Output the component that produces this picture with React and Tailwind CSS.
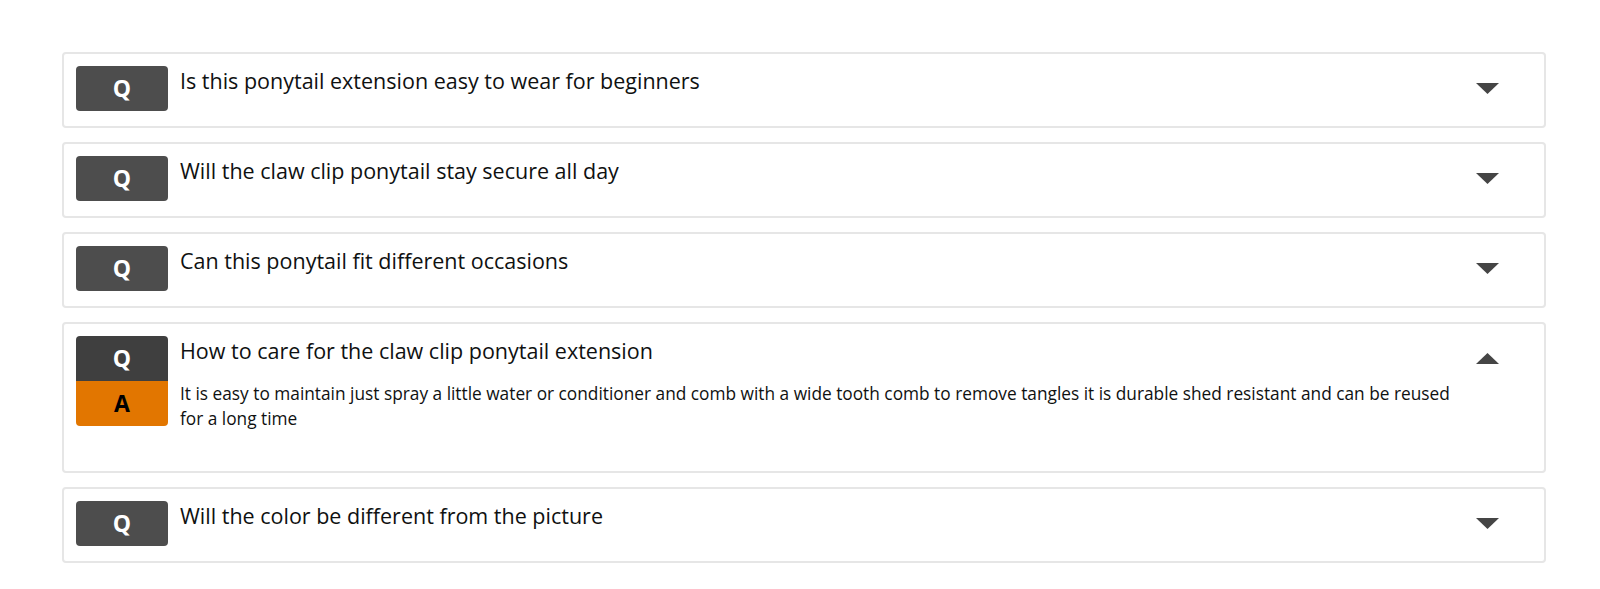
import React, { useState } from "react";

const faqs = [
  { q: "Is this ponytail extension easy to wear for beginners", a: "" },
  { q: "Will the claw clip ponytail stay secure all day", a: "" },
  { q: "Can this ponytail fit different occasions", a: "" },
  {
    q: "How to care for the claw clip ponytail extension",
    a: "It is easy to maintain just spray a little water or conditioner and comb with a wide tooth comb to remove tangles it is durable shed resistant and can be reused for a long time",
  },
  { q: "Will the color be different from the picture", a: "" },
];

const Arrow = ({ up }) => (
  <svg width="23" height="11" viewBox="0 0 23 11" className="block">
    {up ? (
      <polygon points="0,11 23,11 11.5,0" fill="#454545" />
    ) : (
      <polygon points="0,0 23,0 11.5,11" fill="#454545" />
    )}
  </svg>
);

const FaqItem = ({ item, open, onToggle }) => (
  <div
    className="flex border-2 border-[#e6e6e6] rounded-[4px] bg-white pl-3 pt-3 pb-[15px] cursor-pointer"
    onClick={onToggle}
  >
    <div className="flex flex-col w-[92px] shrink-0">
      <div
        className={`h-[45px] flex items-center justify-center text-white text-[23px] font-bold ${
          open ? "bg-[#3f3f3f] rounded-t-[4px]" : "bg-[#4d4d4d] rounded-[4px]"
        }`}
      >
        Q
      </div>
      {open && (
        <div className="h-[45px] flex items-center justify-center bg-[#e27600] text-black text-[23px] font-bold rounded-b-[4px]">
          A
        </div>
      )}
    </div>
    <div className="flex-1 ml-3 mr-4 text-[#0f1111]">
      <div className="h-[45px] text-[21.5px] leading-[30px]">{item.q}</div>
      {open && <p className="text-[17.3px] leading-[25px] mb-[25px]">{item.a}</p>}
    </div>
    <div className="w-[68px] shrink-0 pt-[17px]">
      <Arrow up={open} />
    </div>
  </div>
);

export default function App() {
  const [openIdx, setOpenIdx] = useState(3);

  return (
    <div
      className="min-h-screen bg-white pt-[52px] pl-[62px] pr-[54px]"
      style={{ fontFamily: "'Open Sans', 'Noto Sans', sans-serif" }}
    >
      <div className="flex flex-col gap-[14px]">
        {faqs.map((item, i) => (
          <FaqItem
            key={i}
            item={item}
            open={openIdx === i}
            onToggle={() => setOpenIdx(openIdx === i ? -1 : i)}
          />
        ))}
      </div>
    </div>
  );
}
